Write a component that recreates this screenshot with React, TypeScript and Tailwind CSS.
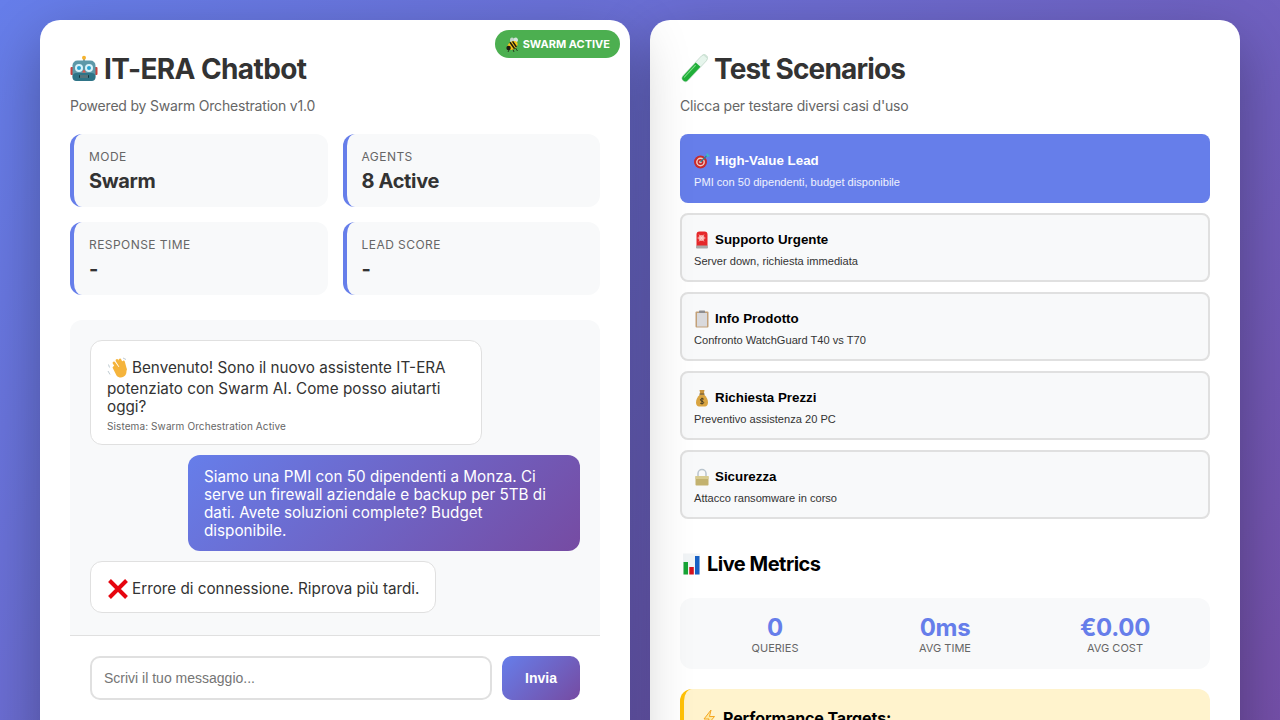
const Robot = ({ size = 28 }: { size?: number }) => (
  <svg width={size} height={size} viewBox="0 0 28 28" className="inline-block shrink-0">
    <rect x="13" y="3" width="2" height="3" fill="#8a9aa5" />
    <circle cx="14" cy="2.8" r="2" fill="#f5b32e" />
    <rect x="0.5" y="12" width="3" height="8" rx="1" fill="#c9413c" />
    <rect x="24.5" y="12" width="3" height="8" rx="1" fill="#c9413c" />
    <rect x="2.5" y="5.5" width="23" height="20.5" rx="5" fill="#5d98a8" />
    <rect x="2.5" y="18" width="23" height="8" rx="4" fill="#2f7487" />
    <circle cx="9" cy="13" r="4" fill="#d8f3fa" />
    <circle cx="19" cy="13" r="4" fill="#d8f3fa" />
    <circle cx="9" cy="13" r="2" fill="#2aa3cf" />
    <circle cx="19" cy="13" r="2" fill="#2aa3cf" />
    <path d="M14 14.5l2 3h-4z" fill="#e2574c" />
    <rect x="9" y="20" width="10" height="3" rx="1" fill="#12343e" />
    <path d="M11 20v3M13 20v3M15 20v3M17 20v3" stroke="#b9d3da" strokeWidth="0.8" />
  </svg>
)

const Bee = () => (
  <svg width="15" height="15" viewBox="0 0 15 15" className="inline-block shrink-0">
    <ellipse cx="10" cy="3.5" rx="3.2" ry="2.4" fill="#d5e4dc" transform="rotate(-40 10 3.5)" />
    <ellipse cx="7" cy="3.2" rx="2" ry="2.8" fill="#c3d6cc" />
    <ellipse cx="7.5" cy="8.5" rx="5.5" ry="4" fill="#f5c518" transform="rotate(-35 7.5 8.5)" />
    <path d="M5 5.2l4.6 6.6M7.6 4.4l3.8 5.6" stroke="#1d1a12" strokeWidth="1.5" />
    <circle cx="3.6" cy="11" r="2.2" fill="#1d1a12" />
    <path d="M4 13l-1 2M8 12.5l1 2.5M10.5 11l2 3" stroke="#1d1a12" strokeWidth="0.8" />
  </svg>
)

const TestTube = () => (
  <svg width="28" height="30" viewBox="0 0 28 30" className="inline-block shrink-0">
    <g transform="rotate(43 14 15)">
      <rect x="10.500" y="-3" width="7" height="34" rx="3.500" fill="#e6f5ec" stroke="#b4cdbd" strokeWidth="0.6" />
      <path d="M10.800 9h6.400v18.500a3.200 3.200 0 0 1-6.400 0z" fill="#1fae38" />
      <path d="M12.500 11v17" stroke="#7fe08a" strokeWidth="1" />
      <rect x="9.800" y="-3.500" width="8.400" height="2" rx="1" fill="#cfe3d6" />
    </g>
  </svg>
)

const Wave = () => (
  <svg width="22" height="22" viewBox="0 0 22 22" className="inline-block shrink-0">
    <path d="M7 6l5 7M10 3.500l5 8M13 3l3.800 8.500M16.500 5l2 7.500" stroke="#f5b43c" strokeWidth="2.800" strokeLinecap="round" />
    <path d="M5.500 10.500l4 8c2.500 3 7 2.500 9-.5 1.500-2.500 1-5 .5-7.500l-1.500-1-8 .5-2-2z" fill="#f5b43c" />
    <path d="M1.500 7.500l1 3M1 14l2 3.500M16 1l3 1.500" stroke="#b8c4cc" strokeWidth="0.9" />
  </svg>
)

const CrossMark = () => (
  <svg width="22" height="22" viewBox="0 0 22 22" className="inline-block shrink-0">
    <path d="M2.500 2.500l17 17M19.500 2.500l-17 17" stroke="#e6050f" strokeWidth="4" />
  </svg>
)

const Target = () => (
  <svg width="16" height="16" viewBox="0 0 16 16" className="inline-block shrink-0">
    <circle cx="6.500" cy="9" r="6.500" fill="#c92a2a" />
    <circle cx="6.500" cy="9" r="4.400" fill="#f1cfc6" />
    <circle cx="6.500" cy="9" r="3" fill="#c92a2a" />
    <circle cx="6.500" cy="9" r="1.300" fill="#f1cfc6" />
    <path d="M6.500 9l6.500-6.500" stroke="#2f7f8f" strokeWidth="1.200" />
    <path d="M12 1.500l.5 2 2 .5 1.500-2-1.800-.2-.2-1.800z" fill="#3fb6c9" />
  </svg>
)

const Siren = () => (
  <svg width="16" height="18" viewBox="0 0 16 18" className="inline-block shrink-0">
    <path d="M2.500 3.500A3 3 0 0 1 5.500.5h5a3 3 0 0 1 3 3V15h-11z" fill="#e5282a" />
    <circle cx="7.500" cy="7" r="3" fill="#f7a5a0" />
    <path d="M5 3.500l5 7M10 3.500l-5 7M3.500 7h8" stroke="#ffe4e0" strokeWidth="0.6" />
    <rect x="2" y="14.500" width="12" height="3" rx="1" fill="#a9a9a9" />
  </svg>
)

const Clipboard = () => (
  <svg width="16" height="18" viewBox="0 0 16 18" className="inline-block shrink-0">
    <rect x="1.500" y="1.500" width="13" height="16" rx="1" fill="#c2a078" />
    <rect x="3" y="3" width="10" height="13.500" fill="#d9d9dc" />
    <rect x="5" y="0.500" width="6" height="2.500" rx="0.500" fill="#8d8d90" />
  </svg>
)

const MoneyBag = () => (
  <svg width="16" height="18" viewBox="0 0 16 18" className="inline-block shrink-0">
    <path d="M5.500 1h5L9.800 5h-3.600z" fill="#c9953f" />
    <path d="M6 5.500h4c2.500 2 4 5 4 8 0 2.500-1.500 4-3 4H5c-1.500 0-3-1.500-3-4 0-3 1.500-6 4-8z" fill="#d9a441" />
    <rect x="5.500" y="4.500" width="5" height="1.200" fill="#6d5426" />
    <path d="M9.800 10.200C9 9.400 6.500 9.400 6.400 10.900c0 1.600 3.300 1 3.300 2.700 0 1.400-2.600 1.400-3.500.6M8 8.700v6.500" stroke="#3b3423" strokeWidth="0.9" fill="none" />
  </svg>
)

const Lock = () => (
  <svg width="16" height="18" viewBox="0 0 16 18" className="inline-block shrink-0">
    <path d="M4 9V5.500a4 4 0 0 1 8 0V9" fill="none" stroke="#b9c4cd" strokeWidth="1.500" />
    <rect x="1.500" y="8" width="13" height="9.500" rx="0.800" fill="#c3b26f" />
    <rect x="1.500" y="8" width="13" height="3" fill="#d8cb8f" />
  </svg>
)

const BarChart = () => (
  <svg width="19" height="22" viewBox="0 0 18 22" className="ml-[2px] inline-block shrink-0">
    <rect x="0.500" y="0.500" width="17" height="21" fill="#f1f4f6" />
    <rect x="1" y="9" width="4.500" height="12.500" fill="#18a537" />
    <rect x="6.800" y="14" width="4.500" height="7.500" fill="#d5121d" />
    <rect x="12.500" y="3" width="4.500" height="18.500" fill="#1760c4" />
  </svg>
)

const Bolt = () => (
  <svg width="14" height="18" viewBox="0 0 14 18" className="ml-[3px] inline-block shrink-0">
    <path d="M9 1L2 10h5l-2.500 7L12.500 7.500H7.500z" fill="#fde9a0" stroke="#f5a623" strokeWidth="1" />
  </svg>
)

const Stat = ({ label, value }: { label: string; value: string }) => (
  <div className="rounded-xl border-l-4 border-[#667eea] bg-[#f8f9fa] p-[15px]">
    <div className="text-xs leading-[15px] tracking-[0.45px] text-[#666] uppercase">{label}</div>
    <div className="mt-[6px] text-xl leading-[22px] font-bold tracking-[-0.35px] text-[#333]">{value}</div>
  </div>
)

const scenarios = [
  { icon: <Target />, title: "High-Value Lead", sub: "PMI con 50 dipendenti, budget disponibile", active: true },
  { icon: <Siren />, title: "Supporto Urgente", sub: "Server down, richiesta immediata" },
  { icon: <Clipboard />, title: "Info Prodotto", sub: "Confronto WatchGuard T40 vs T70" },
  { icon: <MoneyBag />, title: "Richiesta Prezzi", sub: "Preventivo assistenza 20 PC" },
  { icon: <Lock />, title: "Sicurezza", sub: "Attacco ransomware in corso" },
]

const metrics = [
  { value: "0", label: "Queries" },
  { value: "0ms", label: "Avg Time" },
  { value: "€0.00", label: "Avg Cost" },
]

export default function App() {
  return (
    <div className="h-screen overflow-hidden bg-[linear-gradient(135deg,#667eea,#764ba2_110%)] font-['Inter',sans-serif]">
      <div className="mx-auto grid max-w-[1200px] grid-cols-2 gap-5 pt-5">
        {/* Chat panel */}
        <div className="relative rounded-[20px] bg-white p-[30px] shadow-[0_20px_60px_rgba(0,0,0,0.3)]">
          <div className="absolute top-[10px] right-[10px] flex h-7 items-center gap-[3px] rounded-full bg-[#4caf50] px-[10px] text-[11px] font-bold text-white">
            <Bee />
            SWARM ACTIVE
          </div>
          <h1 className="flex h-9 items-center gap-[6px] pt-[2px] text-[28px] leading-9 font-bold tracking-[-0.6px] text-[#333]">
            <Robot />
            IT-ERA Chatbot
          </h1>
          <p className="mt-[11px] text-sm leading-[17px] tracking-[-0.2px] text-[#666]">Powered by Swarm Orchestration v1.0</p>
          <div className="mt-5 grid grid-cols-2 gap-[15px]">
            <Stat label="Mode" value="Swarm" />
            <Stat label="Agents" value="8 Active" />
            <Stat label="Response Time" value="-" />
            <Stat label="Lead Score" value="-" />
          </div>
          <div className="mt-[25px] overflow-hidden rounded-t-xl">
            <div className="flex h-[315px] flex-col gap-[10px] bg-[#f8f9fa] p-5">
              <div className="w-[392px] rounded-xl border border-[#e0e0e0] bg-white px-4 py-3 text-[15.25px] leading-[18px] text-[#333]">
                <div className="flex h-[27px] items-center gap-[3px] pt-[2px]">
                  <Wave />
                  Benvenuto! Sono il nuovo assistente IT-ERA
                </div>
                potenziato con Swarm AI. Come posso aiutarti oggi?
                <div className="mt-1 text-[10px] leading-3 tracking-[0.1px] text-[#666]">Sistema: Swarm Orchestration Active</div>
              </div>
              <div className="w-[392px] self-end rounded-xl bg-[linear-gradient(135deg,#667eea,#764ba2)] px-4 pt-[13px] pb-[11px] text-[15.25px] leading-[18px] text-white">
                Siamo una PMI con 50 dipendenti a Monza. Ci serve un firewall aziendale e backup per 5TB di dati. Avete soluzioni complete? Budget disponibile.
              </div>
              <div className="flex w-fit items-center gap-[3px] rounded-xl border border-[#e0e0e0] bg-white px-4 pt-[14px] pb-[10px] text-[15.25px] leading-[26px] text-[#333]">
                <CrossMark />
                Errore di connessione. Riprova più tardi.
              </div>
            </div>
            <div className="flex gap-[10px] border-t border-[#e0e0e0] bg-white p-5">
              <input
                placeholder="Scrivi il tuo messaggio..."
                className="h-11 min-w-0 flex-1 rounded-[10px] border-2 border-[#e0e0e0] px-3 font-['Liberation_Sans',sans-serif] text-sm text-[#333] placeholder:text-[#757575]"
              />
              <button className="h-11 w-[78px] rounded-[10px] bg-[linear-gradient(135deg,#667eea,#764ba2)] font-['Liberation_Sans',sans-serif] text-sm font-bold text-white">
                Invia
              </button>
            </div>
          </div>
        </div>

        {/* Scenarios panel */}
        <div className="rounded-[20px] bg-white p-[30px] shadow-[0_20px_60px_rgba(0,0,0,0.3)]">
          <h1 className="flex h-9 items-center gap-[6px] pt-[2px] text-[28px] leading-9 font-bold tracking-[-0.85px] text-[#333]">
            <TestTube />
            Test Scenarios
          </h1>
          <p className="mt-[11px] text-sm leading-[17px] tracking-[-0.2px] text-[#666]">Clicca per testare diversi casi d'uso</p>
          <div className="mt-5 flex flex-col gap-[10px]">
            {scenarios.map((s) =>
              s.active ? (
                <button key={s.title} className="h-[69px] rounded-lg bg-[#667eea] px-[14px] pt-[5px] text-left font-['Liberation_Sans',sans-serif] text-white">
                  <div className="flex h-4 items-center gap-[5px] text-[13.333px] leading-4 font-bold">
                    {s.icon}
                    {s.title}
                  </div>
                  <div className="mt-[7px] text-[11.1px] leading-[13px] text-white/90">{s.sub}</div>
                </button>
              ) : (
                <button key={s.title} className="h-[69px] rounded-lg border-2 border-[#e0e0e0] bg-[#f8f9fa] px-3 pt-[5px] text-left font-['Liberation_Sans',sans-serif] text-black">
                  <div className="flex h-4 items-center gap-[5px] text-[13.333px] leading-4 font-bold">
                    {s.icon}
                    {s.title}
                  </div>
                  <div className="mt-[7px] text-[11.1px] leading-[13px] text-[#333]">{s.sub}</div>
                </button>
              ),
            )}
          </div>
          <h3 className="mt-[33px] flex h-6 items-center gap-[6px] text-xl leading-6 font-bold tracking-[-0.5px] text-black">
            <BarChart />
            Live Metrics
          </h3>
          <div className="mt-[22px] grid grid-cols-3 gap-5 rounded-xl bg-[#f8f9fa] px-5 pt-4 pb-[14px]">
            {metrics.map((m) => (
              <div key={m.label} className="text-center">
                <div className="text-2xl leading-7 font-bold tracking-[-0.3px] text-[#667eea]">{m.value}</div>
                <div className="text-[11px] leading-[13px] text-[#666] uppercase">{m.label}</div>
              </div>
            ))}
          </div>
          <div className="mt-5 rounded-xl border-l-4 border-[#ffc107] bg-[#fff3cd] p-[15px]">
            <div className="flex h-6 items-center gap-[7px] pt-1 text-base font-bold tracking-[-0.1px] text-black">
              <Bolt />
              Performance Targets:
            </div>
          </div>
        </div>
      </div>
    </div>
  )
}
